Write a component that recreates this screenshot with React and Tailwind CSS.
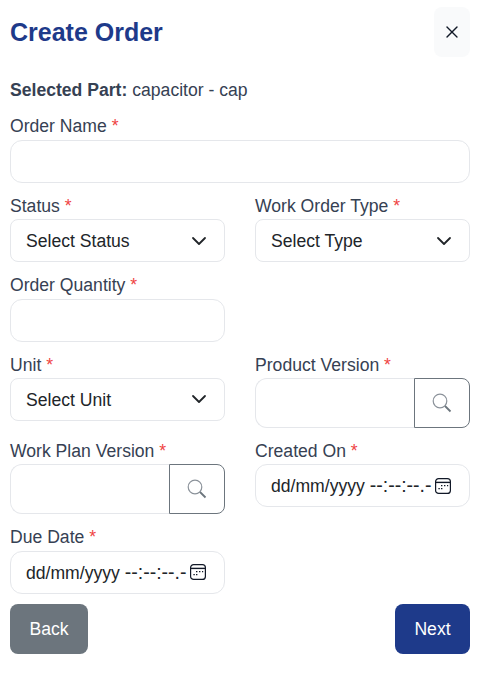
import { ChevronDown, X } from "lucide-react";

const font = "font-['Liberation_Sans',Arial,sans-serif]";

function Label({ children }) {
  return (
    <label className="block h-[26.4px] text-[17.6px] leading-[26.4px] text-gray-700">
      {children} <span className="text-[#ef4444]">*</span>
    </label>
  );
}

function TextField({ label }) {
  return (
    <div>
      <Label>{label}</Label>
      <input className="block h-[43px] w-full rounded-xl border border-[#e5e7eb] bg-white px-4 outline-none" />
    </div>
  );
}

function SelectField({ label, text }) {
  return (
    <div>
      <Label>{label}</Label>
      <div className="flex h-[43px] items-center justify-between rounded-lg border border-[#e5e7eb] bg-white pl-[15px] pr-[13px] text-[17.6px] text-[#212529]">
        <span className="pt-px">{text}</span>
        <ChevronDown size={24} strokeWidth={1.8} color="#212529" />
      </div>
    </div>
  );
}

function SearchField({ label }) {
  return (
    <div>
      <Label>{label}</Label>
      <div className="flex h-[50px]">
        <input className="h-full min-w-0 flex-1 rounded-l-xl border border-r-0 border-[#e5e7eb] bg-white outline-none" />
        <button className="flex w-14 items-center justify-center rounded-r-lg border border-[#6c757d] bg-white">
          <svg width="20" height="20" viewBox="0 0 20 20" fill="none">
            <circle cx="8" cy="8" r="6.8" stroke="#8b929a" strokeWidth="1.2" />
            <path d="M13 13l5.5 5.5" stroke="#6c757d" strokeWidth="1.8" />
          </svg>
        </button>
      </div>
    </div>
  );
}

function DateField({ label }) {
  return (
    <div>
      <Label>{label}</Label>
      <div className="flex h-[43px] items-center justify-between rounded-xl border border-[#e5e7eb] bg-white pl-[15px] pr-[18px] text-[17.6px] text-[#212529]">
        <span className="whitespace-nowrap">
          dd/mm/yyyy <span className="text-[19.5px]">--:--:--.-</span>
        </span>
        <svg width="16" height="16" viewBox="0 0 16 16" fill="none" stroke="#111827" className="shrink-0">
          <rect x="0.6" y="0.6" width="14.8" height="14.8" rx="3" strokeWidth="1.2" />
          <path d="M1 4.4h14" strokeWidth="1.4" />
          <path d="M6 7.6h1.4M9 7.6h1.4M12 7.6h1.2M3.4 10.6h1.4M6 10.6h1.4" strokeWidth="1.4" />
        </svg>
      </div>
    </div>
  );
}

export default function App() {
  return (
    <div className={`${font} min-h-[679px] w-[480px] bg-white px-[10px] pt-[7px]`}>
      {/* header */}
      <div className="flex items-start justify-between">
        <h2 className="pt-[9px] text-[25px] font-bold leading-8 text-[#1e3a8a]">Create Order</h2>
        <button className="flex h-[50px] w-9 items-center justify-center rounded-lg bg-[#f9fafb]">
          <X size={20} strokeWidth={1.6} color="#111827" />
        </button>
      </div>

      <p className="mt-5 h-[26.4px] text-[17.6px] leading-[26.4px] text-gray-700">
        <strong className="font-bold">Selected Part:</strong> capacitor - cap
      </p>

      <div className="mt-[10px]">
        <TextField label="Order Name" />
      </div>

      <div className="mt-[10px] grid grid-cols-2 gap-x-[30px] gap-y-[10px]">
        <SelectField label="Status" text="Select Status" />
        <SelectField label="Work Order Type" text="Select Type" />
        <TextField label="Order Quantity" />
        <div />
        <SelectField label="Unit" text="Select Unit" />
        <SearchField label="Product Version" />
        <SearchField label="Work Plan Version" />
        <DateField label="Created On" />
        <DateField label="Due Date" />
      </div>

      {/* actions */}
      <div className="mt-[10px] flex justify-between">
        <button className="h-[50px] w-[78px] rounded-lg bg-[#6c757d] text-[17.6px] text-white">Back</button>
        <button className="h-[50px] w-[75px] rounded-lg bg-[#1e3a8a] text-[17.6px] text-white">Next</button>
      </div>
    </div>
  );
}
